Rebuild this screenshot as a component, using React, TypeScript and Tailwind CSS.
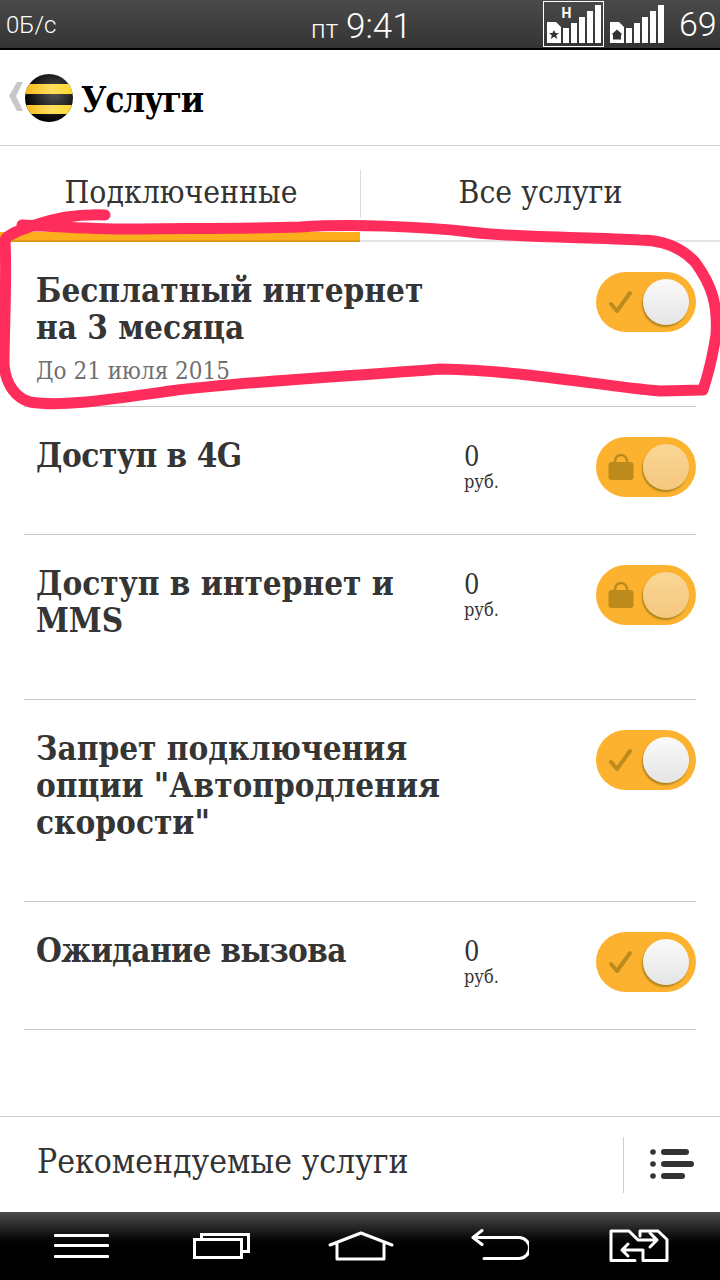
import React from "react";

const serif = { fontFamily: '"DejaVu Serif Condensed", "DejaVu Serif", serif' };

function Bars({ h }: { h?: boolean }) {
  return (
    <svg width="56" height="46" viewBox="0 0 56 46" fill="#fff" className="block">
      <path d="M1 21h9l5 5v16H1z" />
      <path
        d={h ? "M8 29l1.500 3h3.500l-2.800 2.200 1 3.800-3.200-2.200-3.200 2.200 1-3.800-2.800-2.200h3.500z" : "M8 28.500l5.500 5H12v5H4v-5H2.500z"}
        fill="#333"
      />
      <rect x="17" y="27" width="6" height="15" />
      <rect x="25" y="22" width="6" height="20" />
      <rect x="33" y="16" width="6" height="26" />
      <rect x="41" y="10" width="6" height="32" />
      <rect x="49" y="4" width="6" height="38" />
    </svg>
  );
}

function Toggle({ locked }: { locked?: boolean }) {
  return (
    <div className="flex h-[60px] w-[100px] shrink-0 items-center rounded-full bg-[#fdb22f] pl-[12px] pr-[7px]">
      <div className="flex w-[26px] justify-center">
        {locked ? (
          <svg width="26" height="28" viewBox="0 0 26 28">
            <path d="M7 11V8a6 6 0 0 1 12 0v3" fill="none" stroke="#bd8b1c" strokeWidth="2.500" />
            <rect x="0.500" y="9" width="25" height="18" rx="3" fill="#bd8b1c" />
          </svg>
        ) : (
          <svg width="26" height="26" viewBox="0 0 26 26">
            <path d="M3 15l6 7L22 4" fill="none" stroke="#bd8b1c" strokeWidth="4" strokeLinecap="round" strokeLinejoin="round" />
          </svg>
        )}
      </div>
      <div
        className={`ml-auto h-[46px] w-[46px] rounded-full shadow-[-1px_2px_2px_#a9801f] ${
          locked ? "bg-gradient-to-b from-[#fad696] to-[#f4c87e]" : "bg-gradient-to-b from-[#fafafa] to-[#e4e4e4]"
        }`}
      />
    </div>
  );
}

function Price() {
  return (
    <div className="w-[132px] shrink-0 pt-[34px] text-[#333]" style={serif}>
      <div className="text-[27px] leading-[32px]">0</div>
      <div className="text-[18px] leading-[18px]">руб.</div>
    </div>
  );
}

function Row({
  lines,
  sub,
  price,
  locked,
  h,
  tight = "",
}: {
  lines: string[];
  sub?: string;
  price?: boolean;
  locked?: boolean;
  h: string;
  tight?: string;
}) {
  return (
    <div className={`flex border-b border-[#c8c8c8] ${h}`}>
      <div className={`min-w-0 flex-1 pl-[12px] pt-[30px] text-[33px] font-bold leading-[37px] text-[#353535] ${tight}`} style={serif}>
        {lines.map((l) => (
          <div key={l} className="whitespace-nowrap">
            {l}
          </div>
        ))}
        {sub && <div className="mt-[10px] text-[24px] font-normal leading-[30px] text-[#707070]">{sub}</div>}
      </div>
      {price && <Price />}
      <div className="pt-[30px]">
        <Toggle locked={locked} />
      </div>
    </div>
  );
}

export default function App() {
  return (
    <div className="relative flex h-[1280px] w-[720px] flex-col overflow-hidden bg-white">
      {/* status bar */}
      <div
        className="flex h-[50px] shrink-0 items-center border-b-2 border-black bg-gradient-to-b from-[#4a4a4a] to-[#343434] pl-[6px] text-white"
        style={{ fontFamily: "Roboto, sans-serif" }}
      >
        <div className="w-[305px] pt-[2px] text-[24px] font-light leading-none">0Б/с</div>
        <div className="flex w-[232px] items-baseline gap-[8px] pt-[4px] font-light leading-none">
          <span className="text-[26px]">пт</span>
          <span className="text-[35px]">9:41</span>
        </div>
        <div className="flex h-[46px] w-[61px] items-center justify-center border border-white">
          <div className="relative">
            <Bars h />
            <span className="absolute left-[16px] top-[5px] text-[14px] font-bold leading-none">H</span>
          </div>
        </div>
        <div className="ml-[5px] mr-[14px]">
          <Bars />
        </div>
        <div className="text-[34px] font-light leading-none">69</div>
      </div>

      {/* header */}
      <div className="flex h-[96px] shrink-0 items-center border-b border-[#cfcfcf] pl-[9px]">
        <svg width="15" height="30" viewBox="0 0 15 30" className="-mt-[4px]">
          <path d="M8 1h6L7 15l7 15H8L0 15z" fill="#c8c8c8" />
        </svg>
        <svg width="50" height="48" viewBox="0 0 50 48">
          <defs>
            <clipPath id="ball">
              <ellipse cx="25" cy="24" rx="24" ry="24" />
            </clipPath>
            <linearGradient id="ye" x1="0" x2="1" y1="0" y2="0">
              <stop offset="0" stopColor="#f8b516" />
              <stop offset="0.55" stopColor="#ffdf60" />
              <stop offset="1" stopColor="#ffd92a" />
            </linearGradient>
            <radialGradient id="bk" cx="0.6" cy="0.4" r="0.6">
              <stop offset="0" stopColor="#555" />
              <stop offset="1" stopColor="#000" />
            </radialGradient>
          </defs>
          <g clipPath="url(#ball)">
            <rect width="50" height="48" fill="url(#bk)" />
            <rect y="10" width="50" height="10" fill="url(#ye)" />
            <rect y="31" width="50" height="9" fill="url(#ye)" />
          </g>
        </svg>
        <div className="ml-[7px] pt-[4px] text-[35px] font-bold leading-none tracking-[-1.3px] text-black" style={serif}>
          Услуги
        </div>
      </div>

      {/* tabs */}
      <div className="flex h-[96px] shrink-0 text-[31.6px] leading-none text-[#333]" style={serif}>
        <div className="flex w-[360px] flex-col">
          <div className="flex flex-1 items-start justify-center pl-[2px] pt-[31px]">Подключенные</div>
          <div className="h-[10px] border-b-2 border-[#e09a1a] bg-[#fdae1c]" />
        </div>
        <div className="flex flex-1 flex-col border-b-2 border-[#e4e4e4]">
          <div className="mt-[24px] flex h-[48px] items-start justify-center border-l border-[#dcdcdc] pt-[7px]">Все услуги</div>
        </div>
      </div>

      {/* list */}
      <div className="flex-1 px-[24px]">
        <Row h="h-[165px]" lines={["Бесплатный интернет", "на 3 месяца"]} sub="До 21 июля 2015" />
        <Row h="h-[128px]" tight="tracking-[-0.45px]" lines={["Доступ в 4G"]} price locked />
        <Row h="h-[165px]" lines={["Доступ в интернет и", "MMS"]} price locked />
        <Row h="h-[202px]" lines={["Запрет подключения", 'опции "Автопродления', 'скорости"']} />
        <Row h="h-[128px]" tight="tracking-[-0.6px]" lines={["Ожидание вызова"]} price />
      </div>

      {/* recommended */}
      <div className="flex h-[96px] shrink-0 items-center border-t border-[#cfcfcf] pl-[37px]">
        <div className="flex-1 pb-[6px] text-[33.4px] leading-none text-[#333]" style={serif}>
          Рекомендуемые услуги
        </div>
        <div className="flex h-[56px] w-[97px] items-center justify-center border-l border-[#cfcfcf]">
          <svg width="44" height="32" viewBox="0 0 44 32" fill="#333">
            <circle cx="3" cy="3" r="2.800" />
            <circle cx="3" cy="15" r="2.800" />
            <circle cx="3" cy="27" r="2.800" />
            <rect x="11" y="0" width="28" height="6" rx="3" />
            <rect x="11" y="12" width="33" height="6" rx="3" />
            <rect x="11" y="24" width="24" height="6" rx="3" />
          </svg>
        </div>
      </div>

      {/* nav */}
      <div className="flex h-[68px] shrink-0 items-start bg-gradient-to-b from-[#4e4e4e] via-[#000] via-60% to-black pl-[54px]">
        <svg width="55" height="24" viewBox="0 0 55 24" fill="#fff" className="mt-[22px]">
          <rect y="0" width="55" height="3" rx="1" />
          <rect y="10" width="55" height="3" rx="1" />
          <rect y="21" width="55" height="3" rx="1" />
        </svg>
        <svg width="58" height="30" viewBox="0 0 58 30" fill="none" stroke="#fff" strokeWidth="3" className="ml-[83px] mt-[19px]">
          <rect x="2.500" y="8.500" width="47" height="18" />
          <path d="M9.500 8V3.500h47v17H50" />
        </svg>
        <svg width="66" height="30" viewBox="0 0 66 30" fill="none" stroke="#fff" strokeWidth="3" strokeLinecap="round" strokeLinejoin="round" className="ml-[78px] mt-[19px]">
          <path d="M2 14L33 2l31 12M9 12v16h47V12" />
        </svg>
        <svg width="58" height="33" viewBox="0 0 58 33" fill="none" stroke="#fff" strokeWidth="3" strokeLinecap="round" strokeLinejoin="round" className="ml-[77px] mt-[17px]">
          <path d="M11 1.500L2 8.500l9 7M2 8.500h46a10.500 10.500 0 0 1 0 21H13" />
        </svg>
        <svg width="60" height="34" viewBox="0 0 60 34" fill="none" stroke="#fff" strokeWidth="3" strokeLinecap="round" strokeLinejoin="round" className="ml-[80px] mt-[17px]">
          <path d="M26 31.500H2V2h18l9 9h19M41 4l7 7-7 7" />
          <path d="M31 7V2h18l9 8.500v21H34V21H13M19 15l-6 6 6 6" />
        </svg>
      </div>

      {/* hand-drawn highlight */}
      <svg
        className="pointer-events-none absolute left-0 top-0"
        width="720"
        height="420"
        viewBox="0 0 720 420"
        fill="none"
        stroke="#ff2d5c"
        strokeWidth="11"
        strokeLinecap="round"
        strokeLinejoin="round"
      >
        <path d="M105 215C80 214 55 218 35 225C20 230 8 234 5 240C7 280 4 330 4 365C6 385 16 398 30 402C60 407 100 401 170 391C250 381 340 377 440 369C520 370 600 386 660 391L703 390C708 375 712 360 716 335C718 305 712 285 695 262C680 246 660 240 640 240C590 237 520 238 470 232C420 226 350 224 300 227C240 229 170 228 130 229C90 229 50 226 22 225" />
      </svg>
    </div>
  );
}
